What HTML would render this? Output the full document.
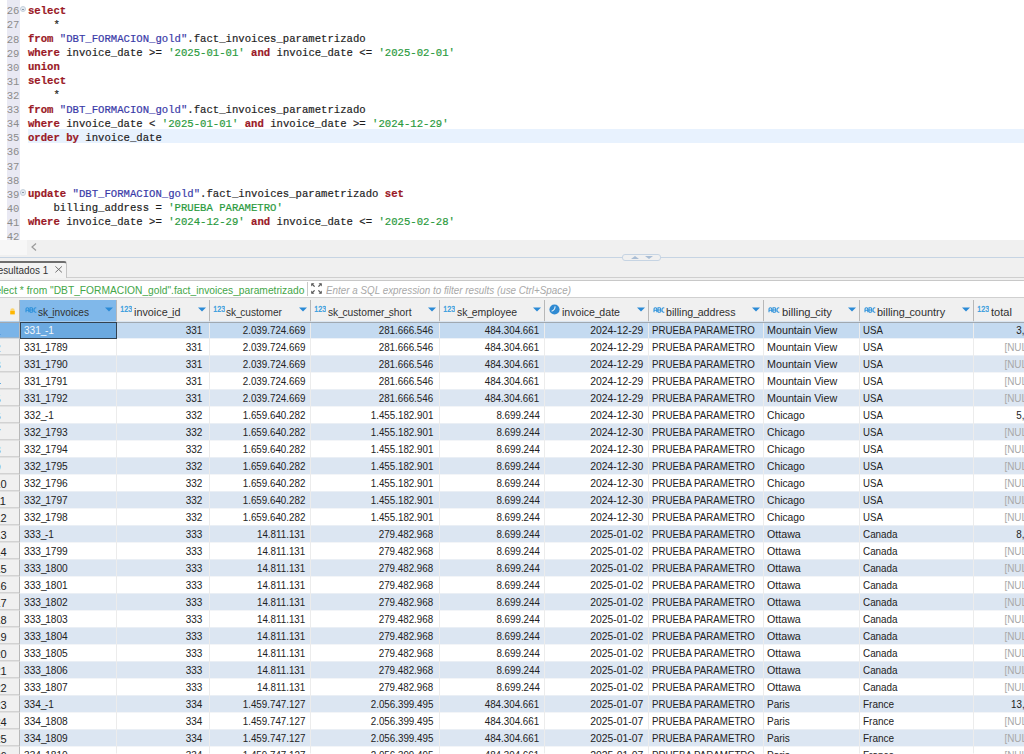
<!DOCTYPE html>
<html><head><meta charset="utf-8">
<style>
* { margin:0; padding:0; box-sizing:border-box; }
html, body { width:1024px; height:754px; overflow:hidden; background:#f0f0f0; position:relative; font-family:"Liberation Sans", sans-serif; }
#editor { position:absolute; left:0; top:0; width:1024px; height:240px; background:#fff; overflow:hidden; }
#gutter { position:absolute; left:7px; top:0; width:13px; height:240px; background:#e9e9f3; }
#curline { position:absolute; left:28px; top:129px; width:1000px; height:14.2px; background:#e8f2fe; }
.ln { position:absolute; left:0px; width:19.5px; text-align:right; font-family:"Liberation Mono", monospace; font-size:12px; line-height:14px; color:#8c8c8c; white-space:pre; transform-origin:right 11px; transform:scale(0.885,0.9); margin-top:0.5px; }
.cl { position:absolute; left:28px; font-family:"Liberation Mono", monospace; font-size:11.5px; line-height:14px; white-space:pre; transform-origin:left top; transform:scaleX(0.9232); -webkit-text-stroke:0.2px currentColor; }
.cl b { font-weight:bold; }
.fold { position:absolute; left:20px; width:6.3px; height:6.3px; border-radius:50%; background:#e4eaf0; border:1px solid #c5d0dc; }
.fold::after { content:""; position:absolute; left:0.9px; top:1.7px; width:2.5px; height:1px; background:#8a99aa; }
#hscroll { position:absolute; left:0; top:240px; width:1024px; height:15px; background:#f0f0f0; }
#hscroll .lft { position:absolute; left:0; top:0; width:27px; height:15px; background:#f7f7f7; }
#sash { position:absolute; left:0; top:257px; width:1024px; height:1px; background:#c6d4e3; }
#sashh { position:absolute; left:622px; top:254px; width:39px; height:7px; border:1px solid #c6d4e3; border-radius:3px; background:#f0f0f0; }
#tab { position:absolute; left:-10px; top:261px; width:77px; height:17px; background:#f3f3f3; border-top:2px solid #6e6e6e; border-right:1px solid #c4c4c4; border-top-right-radius:3px; }
#tabtxt { position:absolute; right:976px; top:263px; font-size:11px; line-height:14px; color:#333; white-space:pre; transform-origin:right center; transform:scaleX(0.898); }
#tabline { position:absolute; left:66px; top:277px; width:960px; height:1px; background:#cfcfcf; }
#filter { position:absolute; left:0; top:280px; width:1024px; height:18px; background:#fff; border-top:1px solid #c8c8c8; border-bottom:1px solid #c8c8c8; }
#ftxt { position:absolute; right:719.4px; top:283px; font-size:11px; line-height:14px; color:#44a648; white-space:pre; transform-origin:right center; transform:scaleX(0.931); }
#fsep { position:absolute; left:307px; top:282px; width:1px; height:14px; background:#c8c8c8; }
#fph { position:absolute; left:326px; top:283px; font-size:11px; line-height:14px; font-style:italic; color:#a8a8a8; white-space:pre; transform-origin:left center; transform:scaleX(0.894); }
#header { position:absolute; left:0; top:298px; width:1024px; height:24px; background:#f0f0f0; }
.hcell { position:absolute; top:300px; height:22px; background:#f0f0f0; }
.hhl { background:#80b8ea; }
.hsep { position:absolute; top:300px; width:1px; height:22px; background:#b8b8b8; }
.htxt { position:absolute; top:304.6px; font-size:11px; line-height:14px; color:#303030; white-space:pre; transform-origin:left center; }
.ic { position:absolute; }
.row { position:absolute; left:20px; width:1004px; height:17px; }
.sel { background:#c4daf0; }
.wht { background:#ffffff; }
.alt { background:#dce6f2; }
.rn { position:absolute; left:0; width:20px; height:17px; background:#f0f0f0; border-bottom:1px solid #b4b4b4; border-right:1px solid #b8b8b8; overflow:hidden; }
.rn span { position:absolute; left:-5.6px; top:2px; font-size:11px; line-height:14px; color:#222; }
.rnsel { background:#7ab4e8; }
.selcell { position:absolute; height:17px; background:#6ba9e0; border:1.5px solid #33414f; }
.cell { position:absolute; margin-top:0px; font-size:11px; line-height:17px; color:#222; white-space:pre; transform-origin:left center; }
.cell.r { transform-origin:right center; }
.cell.wt { color:#f4f8fc; }
.cell.nul { color:#a8a8a8; }
.u { letter-spacing:-1.6px; }
.vl { position:absolute; top:322px; width:1px; height:432px; background:#ececec; }
</style></head><body>
<div id="editor">
  <div id="gutter"></div>
  <div id="curline"></div>
  <div class="fold" style="top:5.9px"></div>
  <div class="fold" style="top:189.3px"></div>
<div class="ln" style="top:3.80px">26</div>
<div class="cl" style="top:3.80px"><b style="color:#9a1826">select</b></div>
<div class="ln" style="top:17.91px">27</div>
<div class="cl" style="top:17.91px"><span style="color:#1e1e1e">    *</span></div>
<div class="ln" style="top:32.02px">28</div>
<div class="cl" style="top:32.02px"><b style="color:#9a1826">from</b><span style="color:#1e1e1e"> </span><span style="color:#3a3aa8">"DBT_FORMACION_gold"</span><span style="color:#1e1e1e">.fact_invoices_parametrizado</span></div>
<div class="ln" style="top:46.13px">29</div>
<div class="cl" style="top:46.13px"><b style="color:#9a1826">where</b><span style="color:#1e1e1e"> invoice_date &gt;= </span><span style="color:#2a9a3c">'2025-01-01'</span><span style="color:#1e1e1e"> </span><b style="color:#9a1826">and</b><span style="color:#1e1e1e"> invoice_date &lt;= </span><span style="color:#2a9a3c">'2025-02-01'</span></div>
<div class="ln" style="top:60.24px">30</div>
<div class="cl" style="top:60.24px"><b style="color:#9a1826">union</b></div>
<div class="ln" style="top:74.35px">31</div>
<div class="cl" style="top:74.35px"><b style="color:#9a1826">select</b></div>
<div class="ln" style="top:88.46px">32</div>
<div class="cl" style="top:88.46px"><span style="color:#1e1e1e">    *</span></div>
<div class="ln" style="top:102.57px">33</div>
<div class="cl" style="top:102.57px"><b style="color:#9a1826">from</b><span style="color:#1e1e1e"> </span><span style="color:#3a3aa8">"DBT_FORMACION_gold"</span><span style="color:#1e1e1e">.fact_invoices_parametrizado</span></div>
<div class="ln" style="top:116.68px">34</div>
<div class="cl" style="top:116.68px"><b style="color:#9a1826">where</b><span style="color:#1e1e1e"> invoice_date &lt; </span><span style="color:#2a9a3c">'2025-01-01'</span><span style="color:#1e1e1e"> </span><b style="color:#9a1826">and</b><span style="color:#1e1e1e"> invoice_date &gt;= </span><span style="color:#2a9a3c">'2024-12-29'</span></div>
<div class="ln" style="top:130.79px">35</div>
<div class="cl" style="top:130.79px"><b style="color:#9a1826">order</b><span style="color:#1e1e1e"> </span><b style="color:#9a1826">by</b><span style="color:#1e1e1e"> invoice_date</span></div>
<div class="ln" style="top:144.90px">36</div>
<div class="ln" style="top:159.01px">37</div>
<div class="ln" style="top:173.12px">38</div>
<div class="ln" style="top:187.23px">39</div>
<div class="cl" style="top:187.23px"><b style="color:#9a1826">update</b><span style="color:#1e1e1e"> </span><span style="color:#3a3aa8">"DBT_FORMACION_gold"</span><span style="color:#1e1e1e">.fact_invoices_parametrizado </span><b style="color:#9a1826">set</b></div>
<div class="ln" style="top:201.34px">40</div>
<div class="cl" style="top:201.34px"><span style="color:#1e1e1e">    billing_address = </span><span style="color:#2a9a3c">'PRUEBA PARAMETRO'</span></div>
<div class="ln" style="top:215.45px">41</div>
<div class="cl" style="top:215.45px"><b style="color:#9a1826">where</b><span style="color:#1e1e1e"> invoice_date &gt;= </span><span style="color:#2a9a3c">'2024-12-29'</span><span style="color:#1e1e1e"> </span><b style="color:#9a1826">and</b><span style="color:#1e1e1e"> invoice_date &lt;= </span><span style="color:#2a9a3c">'2025-02-28'</span></div>
<div class="ln" style="top:229.56px">42</div>
</div>
<div id="hscroll"><div class="lft"></div>
<svg style="position:absolute;left:31px;top:3px" width="6" height="8" viewBox="0 0 6 8"><path d="M5 0.5 L1 4 L5 7.5" stroke="#9a9a9a" stroke-width="1.2" fill="none"/></svg></div>
<div id="sash"></div>
<div id="sashh"><svg style="position:absolute;left:4px;top:0px" width="30" height="5" viewBox="0 0 30 5"><path d="M4 4 L8 1 L12 4Z" fill="#a9bdd4"/><path d="M18 1 L22 4 L26 1Z" fill="#a9bdd4"/></svg></div>
<div id="tabline"></div>
<div id="tab"></div>
<div id="tabtxt">Resultados 1</div>
<svg style="position:absolute;left:54.7px;top:266.4px" width="7.3" height="6.8" viewBox="0 0 7.3 6.8"><path d="M0.4 0.4 L6.9 6.4 M6.9 0.4 L0.4 6.4" stroke="#6a6a6a" stroke-width="0.95"/></svg>
<div id="filter"></div>
<div id="ftxt">select * from "DBT_FORMACION_gold".fact_invoices_parametrizado</div>
<div id="fsep"></div>
<svg style="position:absolute;left:311px;top:282.8px" width="11" height="11" viewBox="0 0 11 11"><g fill="#5a5a5a"><path d="M0.2 0.2H3.4L0.2 3.4Z M10.8 0.2H7.6L10.8 3.4Z M0.2 10.8H3.4L0.2 7.6Z M10.8 10.8H7.6L10.8 7.6Z"/></g><path d="M1 1L3.6 3.6M10 1L7.4 3.6M1 10L3.6 7.4M10 10L7.4 7.4" stroke="#5a5a5a" stroke-width="1.3"/></svg>
<div id="fph">Enter a SQL expression to filter results (use Ctrl+Space)</div>
<div id="header"></div>
<div class="hcell hhl" style="left:20px;width:96px"></div>
<svg class="ic" style="left:24.8px;top:306.8px" width="12" height="6" viewBox="0 0 12 6"><path d="M1 5.3V2.3Q1 0.8 2.4 0.8Q3.8 0.8 3.8 2.3V5.3M1 3.2H3.8M5 5.3V0.8H6.7Q7.8 0.8 7.8 1.9Q7.8 2.9 6.7 2.9H5M6.7 2.9Q8 2.9 8 4.1Q8 5.3 6.7 5.3H5M11.3 1.1Q10.8 0.8 10.3 0.8Q9 0.8 9 3Q9 5.3 10.3 5.3Q10.8 5.3 11.3 5" stroke="#2a90da" stroke-width="1.05" fill="none"/></svg>
<div class="htxt" style="left:37.6px;transform:scaleX(0.922)">sk<span class="u">_</span>invoices</div>
<svg class="ic" style="left:105px;top:307px" width="8" height="5" viewBox="0 0 8 5"><path d="M0 0.5H8L4 4.5Z" fill="#2a8ad6"/></svg>
<div class="hcell" style="left:116px;width:93px"></div>
<div class="hsep" style="left:116px"></div>
<svg class="ic" style="left:120px;top:305px" width="12" height="7" viewBox="0 0 12 7"><text x="0.3" y="6.5" font-family="Liberation Sans" font-size="8.5" fill="#3a9ede" stroke="#3a9ede" stroke-width="0.35" textLength="11.8" lengthAdjust="spacingAndGlyphs">123</text></svg>
<div class="htxt" style="left:133.9px;transform:scaleX(0.983)">invoice<span class="u">_</span>id</div>
<svg class="ic" style="left:198px;top:307px" width="8" height="5" viewBox="0 0 8 5"><path d="M0 0.5H8L4 4.5Z" fill="#2a8ad6"/></svg>
<div class="hcell" style="left:209px;width:101px"></div>
<div class="hsep" style="left:209px"></div>
<svg class="ic" style="left:213px;top:305px" width="12" height="7" viewBox="0 0 12 7"><text x="0.3" y="6.5" font-family="Liberation Sans" font-size="8.5" fill="#3a9ede" stroke="#3a9ede" stroke-width="0.35" textLength="11.8" lengthAdjust="spacingAndGlyphs">123</text></svg>
<div class="htxt" style="left:225.6px;transform:scaleX(0.92)">sk<span class="u">_</span>customer</div>
<svg class="ic" style="left:299px;top:307px" width="8" height="5" viewBox="0 0 8 5"><path d="M0 0.5H8L4 4.5Z" fill="#2a8ad6"/></svg>
<div class="hcell" style="left:310px;width:129px"></div>
<div class="hsep" style="left:310px"></div>
<svg class="ic" style="left:314px;top:305px" width="12" height="7" viewBox="0 0 12 7"><text x="0.3" y="6.5" font-family="Liberation Sans" font-size="8.5" fill="#3a9ede" stroke="#3a9ede" stroke-width="0.35" textLength="11.8" lengthAdjust="spacingAndGlyphs">123</text></svg>
<div class="htxt" style="left:327.5px;transform:scaleX(0.93)">sk<span class="u">_</span>customer<span class="u">_</span>short</div>
<svg class="ic" style="left:428px;top:307px" width="8" height="5" viewBox="0 0 8 5"><path d="M0 0.5H8L4 4.5Z" fill="#2a8ad6"/></svg>
<div class="hcell" style="left:439px;width:105px"></div>
<div class="hsep" style="left:439px"></div>
<svg class="ic" style="left:443px;top:305px" width="12" height="7" viewBox="0 0 12 7"><text x="0.3" y="6.5" font-family="Liberation Sans" font-size="8.5" fill="#3a9ede" stroke="#3a9ede" stroke-width="0.35" textLength="11.8" lengthAdjust="spacingAndGlyphs">123</text></svg>
<div class="htxt" style="left:456.8px;transform:scaleX(0.951)">sk<span class="u">_</span>employee</div>
<svg class="ic" style="left:533px;top:307px" width="8" height="5" viewBox="0 0 8 5"><path d="M0 0.5H8L4 4.5Z" fill="#2a8ad6"/></svg>
<div class="hcell" style="left:544px;width:104px"></div>
<div class="hsep" style="left:544px"></div>
<svg class="ic" style="left:549.4px;top:304.3px" width="11" height="11" viewBox="0 0 11 11"><circle cx="5.5" cy="5.5" r="5.1" fill="#2f8ad2"/><path d="M6 2.4Q6.3 5.9 2.6 7.2" stroke="#e8f2fa" stroke-width="1.1" fill="none"/></svg>
<div class="htxt" style="left:562.4px;transform:scaleX(0.963)">invoice<span class="u">_</span>date</div>
<svg class="ic" style="left:637px;top:307px" width="8" height="5" viewBox="0 0 8 5"><path d="M0 0.5H8L4 4.5Z" fill="#2a8ad6"/></svg>
<div class="hcell" style="left:648px;width:115px"></div>
<div class="hsep" style="left:648px"></div>
<svg class="ic" style="left:652.8px;top:306.8px" width="12" height="6" viewBox="0 0 12 6"><path d="M1 5.3V2.3Q1 0.8 2.4 0.8Q3.8 0.8 3.8 2.3V5.3M1 3.2H3.8M5 5.3V0.8H6.7Q7.8 0.8 7.8 1.9Q7.8 2.9 6.7 2.9H5M6.7 2.9Q8 2.9 8 4.1Q8 5.3 6.7 5.3H5M11.3 1.1Q10.8 0.8 10.3 0.8Q9 0.8 9 3Q9 5.3 10.3 5.3Q10.8 5.3 11.3 5" stroke="#2a90da" stroke-width="1.05" fill="none"/></svg>
<div class="htxt" style="left:666.3px;transform:scaleX(0.968)">billing<span class="u">_</span>address</div>
<svg class="ic" style="left:752px;top:307px" width="8" height="5" viewBox="0 0 8 5"><path d="M0 0.5H8L4 4.5Z" fill="#2a8ad6"/></svg>
<div class="hcell" style="left:763px;width:96px"></div>
<div class="hsep" style="left:763px"></div>
<svg class="ic" style="left:767.8px;top:306.8px" width="12" height="6" viewBox="0 0 12 6"><path d="M1 5.3V2.3Q1 0.8 2.4 0.8Q3.8 0.8 3.8 2.3V5.3M1 3.2H3.8M5 5.3V0.8H6.7Q7.8 0.8 7.8 1.9Q7.8 2.9 6.7 2.9H5M6.7 2.9Q8 2.9 8 4.1Q8 5.3 6.7 5.3H5M11.3 1.1Q10.8 0.8 10.3 0.8Q9 0.8 9 3Q9 5.3 10.3 5.3Q10.8 5.3 11.3 5" stroke="#2a90da" stroke-width="1.05" fill="none"/></svg>
<div class="htxt" style="left:781.5px;transform:scaleX(1.016)">billing<span class="u">_</span>city</div>
<svg class="ic" style="left:848px;top:307px" width="8" height="5" viewBox="0 0 8 5"><path d="M0 0.5H8L4 4.5Z" fill="#2a8ad6"/></svg>
<div class="hcell" style="left:859px;width:114px"></div>
<div class="hsep" style="left:859px"></div>
<svg class="ic" style="left:863.8px;top:306.8px" width="12" height="6" viewBox="0 0 12 6"><path d="M1 5.3V2.3Q1 0.8 2.4 0.8Q3.8 0.8 3.8 2.3V5.3M1 3.2H3.8M5 5.3V0.8H6.7Q7.8 0.8 7.8 1.9Q7.8 2.9 6.7 2.9H5M6.7 2.9Q8 2.9 8 4.1Q8 5.3 6.7 5.3H5M11.3 1.1Q10.8 0.8 10.3 0.8Q9 0.8 9 3Q9 5.3 10.3 5.3Q10.8 5.3 11.3 5" stroke="#2a90da" stroke-width="1.05" fill="none"/></svg>
<div class="htxt" style="left:876.8px;transform:scaleX(0.991)">billing<span class="u">_</span>country</div>
<svg class="ic" style="left:962px;top:307px" width="8" height="5" viewBox="0 0 8 5"><path d="M0 0.5H8L4 4.5Z" fill="#2a8ad6"/></svg>
<div class="hcell" style="left:973px;width:68px"></div>
<div class="hsep" style="left:973px"></div>
<svg class="ic" style="left:977px;top:305px" width="12" height="7" viewBox="0 0 12 7"><text x="0.3" y="6.5" font-family="Liberation Sans" font-size="8.5" fill="#3a9ede" stroke="#3a9ede" stroke-width="0.35" textLength="11.8" lengthAdjust="spacingAndGlyphs">123</text></svg>
<div class="htxt" style="left:990.8px;transform:scaleX(1.005)">total</div>
<div style="position:absolute;left:0;top:297px;width:1024px;height:1px;background:#d0d0d0"></div>
<svg style="position:absolute;left:10.1px;top:307.7px" width="5" height="7" viewBox="0 0 5 7"><path d="M0.3 3.2V2.4Q0.3 0.2 2.5 0.2Q4.7 0.2 4.7 2.4V3.2Z" fill="#fcd46a"/><rect x="0.2" y="3" width="4.6" height="3.4" fill="#ffb600"/></svg>
<div style="position:absolute;left:19px;top:300px;width:1px;height:22px;background:#b8b8b8"></div>
<div id="gridwrap" style="position:absolute;left:0;top:0;width:1024px;height:754px;transform:translateY(-0.5px)">
<div class="row sel" style="top:322px"></div>
<div class="row wht" style="top:339px"></div>
<div class="row alt" style="top:356px"></div>
<div class="row wht" style="top:373px"></div>
<div class="row alt" style="top:390px"></div>
<div class="row wht" style="top:407px"></div>
<div class="row alt" style="top:424px"></div>
<div class="row wht" style="top:441px"></div>
<div class="row alt" style="top:458px"></div>
<div class="row wht" style="top:475px"></div>
<div class="row alt" style="top:492px"></div>
<div class="row wht" style="top:509px"></div>
<div class="row alt" style="top:526px"></div>
<div class="row wht" style="top:543px"></div>
<div class="row alt" style="top:560px"></div>
<div class="row wht" style="top:577px"></div>
<div class="row alt" style="top:594px"></div>
<div class="row wht" style="top:611px"></div>
<div class="row alt" style="top:628px"></div>
<div class="row wht" style="top:645px"></div>
<div class="row alt" style="top:662px"></div>
<div class="row wht" style="top:679px"></div>
<div class="row alt" style="top:696px"></div>
<div class="row wht" style="top:713px"></div>
<div class="row alt" style="top:730px"></div>
<div class="row wht" style="top:747px"></div>
<div class="vl" style="left:116px"></div>
<div class="vl" style="left:209px"></div>
<div class="vl" style="left:310px"></div>
<div class="vl" style="left:439px"></div>
<div class="vl" style="left:544px"></div>
<div class="vl" style="left:648px"></div>
<div class="vl" style="left:763px"></div>
<div class="vl" style="left:859px"></div>
<div class="vl" style="left:973px"></div>
<div class="vl" style="left:1041px"></div>
<div class="rn rnsel" style="top:322px"><span>1</span></div>
<div class="cell wt" style="top:322px;left:24px;transform:scaleX(0.916)">331<span class="u">_</span>-1</div>
<div class="cell r" style="top:322px;right:821.3px;transform:scaleX(0.906)">331</div>
<div class="cell r" style="top:322px;right:719.1px;transform:scaleX(0.89)">2.039.724.669</div>
<div class="cell r" style="top:322px;right:590.5px;transform:scaleX(0.89)">281.666.546</div>
<div class="cell r" style="top:322px;right:484.5px;transform:scaleX(0.89)">484.304.661</div>
<div class="cell r" style="top:322px;right:381.0px;transform:scaleX(0.943)">2024-12-29</div>
<div class="cell" style="top:322px;left:652px;transform:scaleX(0.883)">PRUEBA PARAMETRO</div>
<div class="cell" style="top:322px;left:767px;transform:scaleX(0.976)">Mountain View</div>
<div class="cell" style="top:322px;left:863px;transform:scaleX(0.877)">USA</div>
<div class="cell r" style="top:322px;right:-11.5px;transform:scaleX(0.89)">3,96</div>
<div class="rn" style="top:339px"><span>2</span></div>
<div class="cell" style="top:339px;left:24px;transform:scaleX(0.923)">331<span class="u">_</span>1789</div>
<div class="cell r" style="top:339px;right:821.3px;transform:scaleX(0.906)">331</div>
<div class="cell r" style="top:339px;right:719.1px;transform:scaleX(0.89)">2.039.724.669</div>
<div class="cell r" style="top:339px;right:590.5px;transform:scaleX(0.89)">281.666.546</div>
<div class="cell r" style="top:339px;right:484.5px;transform:scaleX(0.89)">484.304.661</div>
<div class="cell r" style="top:339px;right:381.0px;transform:scaleX(0.943)">2024-12-29</div>
<div class="cell" style="top:339px;left:652px;transform:scaleX(0.883)">PRUEBA PARAMETRO</div>
<div class="cell" style="top:339px;left:767px;transform:scaleX(0.976)">Mountain View</div>
<div class="cell" style="top:339px;left:863px;transform:scaleX(0.877)">USA</div>
<div class="cell r nul" style="top:339px;right:-11.5px;transform:scaleX(0.9)">[NULL]</div>
<div class="rn" style="top:356px"><span>3</span></div>
<div class="cell" style="top:356px;left:24px;transform:scaleX(0.923)">331<span class="u">_</span>1790</div>
<div class="cell r" style="top:356px;right:821.3px;transform:scaleX(0.906)">331</div>
<div class="cell r" style="top:356px;right:719.1px;transform:scaleX(0.89)">2.039.724.669</div>
<div class="cell r" style="top:356px;right:590.5px;transform:scaleX(0.89)">281.666.546</div>
<div class="cell r" style="top:356px;right:484.5px;transform:scaleX(0.89)">484.304.661</div>
<div class="cell r" style="top:356px;right:381.0px;transform:scaleX(0.943)">2024-12-29</div>
<div class="cell" style="top:356px;left:652px;transform:scaleX(0.883)">PRUEBA PARAMETRO</div>
<div class="cell" style="top:356px;left:767px;transform:scaleX(0.976)">Mountain View</div>
<div class="cell" style="top:356px;left:863px;transform:scaleX(0.877)">USA</div>
<div class="cell r nul" style="top:356px;right:-11.5px;transform:scaleX(0.9)">[NULL]</div>
<div class="rn" style="top:373px"><span>4</span></div>
<div class="cell" style="top:373px;left:24px;transform:scaleX(0.923)">331<span class="u">_</span>1791</div>
<div class="cell r" style="top:373px;right:821.3px;transform:scaleX(0.906)">331</div>
<div class="cell r" style="top:373px;right:719.1px;transform:scaleX(0.89)">2.039.724.669</div>
<div class="cell r" style="top:373px;right:590.5px;transform:scaleX(0.89)">281.666.546</div>
<div class="cell r" style="top:373px;right:484.5px;transform:scaleX(0.89)">484.304.661</div>
<div class="cell r" style="top:373px;right:381.0px;transform:scaleX(0.943)">2024-12-29</div>
<div class="cell" style="top:373px;left:652px;transform:scaleX(0.883)">PRUEBA PARAMETRO</div>
<div class="cell" style="top:373px;left:767px;transform:scaleX(0.976)">Mountain View</div>
<div class="cell" style="top:373px;left:863px;transform:scaleX(0.877)">USA</div>
<div class="cell r nul" style="top:373px;right:-11.5px;transform:scaleX(0.9)">[NULL]</div>
<div class="rn" style="top:390px"><span>5</span></div>
<div class="cell" style="top:390px;left:24px;transform:scaleX(0.923)">331<span class="u">_</span>1792</div>
<div class="cell r" style="top:390px;right:821.3px;transform:scaleX(0.906)">331</div>
<div class="cell r" style="top:390px;right:719.1px;transform:scaleX(0.89)">2.039.724.669</div>
<div class="cell r" style="top:390px;right:590.5px;transform:scaleX(0.89)">281.666.546</div>
<div class="cell r" style="top:390px;right:484.5px;transform:scaleX(0.89)">484.304.661</div>
<div class="cell r" style="top:390px;right:381.0px;transform:scaleX(0.943)">2024-12-29</div>
<div class="cell" style="top:390px;left:652px;transform:scaleX(0.883)">PRUEBA PARAMETRO</div>
<div class="cell" style="top:390px;left:767px;transform:scaleX(0.976)">Mountain View</div>
<div class="cell" style="top:390px;left:863px;transform:scaleX(0.877)">USA</div>
<div class="cell r nul" style="top:390px;right:-11.5px;transform:scaleX(0.9)">[NULL]</div>
<div class="rn" style="top:407px"><span>6</span></div>
<div class="cell" style="top:407px;left:24px;transform:scaleX(0.916)">332<span class="u">_</span>-1</div>
<div class="cell r" style="top:407px;right:821.3px;transform:scaleX(0.906)">332</div>
<div class="cell r" style="top:407px;right:719.1px;transform:scaleX(0.89)">1.659.640.282</div>
<div class="cell r" style="top:407px;right:590.5px;transform:scaleX(0.89)">1.455.182.901</div>
<div class="cell r" style="top:407px;right:484.5px;transform:scaleX(0.89)">8.699.244</div>
<div class="cell r" style="top:407px;right:381.0px;transform:scaleX(0.943)">2024-12-30</div>
<div class="cell" style="top:407px;left:652px;transform:scaleX(0.883)">PRUEBA PARAMETRO</div>
<div class="cell" style="top:407px;left:767px;transform:scaleX(0.935)">Chicago</div>
<div class="cell" style="top:407px;left:863px;transform:scaleX(0.877)">USA</div>
<div class="cell r" style="top:407px;right:-11.5px;transform:scaleX(0.89)">5,94</div>
<div class="rn" style="top:424px"><span>7</span></div>
<div class="cell" style="top:424px;left:24px;transform:scaleX(0.923)">332<span class="u">_</span>1793</div>
<div class="cell r" style="top:424px;right:821.3px;transform:scaleX(0.906)">332</div>
<div class="cell r" style="top:424px;right:719.1px;transform:scaleX(0.89)">1.659.640.282</div>
<div class="cell r" style="top:424px;right:590.5px;transform:scaleX(0.89)">1.455.182.901</div>
<div class="cell r" style="top:424px;right:484.5px;transform:scaleX(0.89)">8.699.244</div>
<div class="cell r" style="top:424px;right:381.0px;transform:scaleX(0.943)">2024-12-30</div>
<div class="cell" style="top:424px;left:652px;transform:scaleX(0.883)">PRUEBA PARAMETRO</div>
<div class="cell" style="top:424px;left:767px;transform:scaleX(0.935)">Chicago</div>
<div class="cell" style="top:424px;left:863px;transform:scaleX(0.877)">USA</div>
<div class="cell r nul" style="top:424px;right:-11.5px;transform:scaleX(0.9)">[NULL]</div>
<div class="rn" style="top:441px"><span>8</span></div>
<div class="cell" style="top:441px;left:24px;transform:scaleX(0.923)">332<span class="u">_</span>1794</div>
<div class="cell r" style="top:441px;right:821.3px;transform:scaleX(0.906)">332</div>
<div class="cell r" style="top:441px;right:719.1px;transform:scaleX(0.89)">1.659.640.282</div>
<div class="cell r" style="top:441px;right:590.5px;transform:scaleX(0.89)">1.455.182.901</div>
<div class="cell r" style="top:441px;right:484.5px;transform:scaleX(0.89)">8.699.244</div>
<div class="cell r" style="top:441px;right:381.0px;transform:scaleX(0.943)">2024-12-30</div>
<div class="cell" style="top:441px;left:652px;transform:scaleX(0.883)">PRUEBA PARAMETRO</div>
<div class="cell" style="top:441px;left:767px;transform:scaleX(0.935)">Chicago</div>
<div class="cell" style="top:441px;left:863px;transform:scaleX(0.877)">USA</div>
<div class="cell r nul" style="top:441px;right:-11.5px;transform:scaleX(0.9)">[NULL]</div>
<div class="rn" style="top:458px"><span>9</span></div>
<div class="cell" style="top:458px;left:24px;transform:scaleX(0.923)">332<span class="u">_</span>1795</div>
<div class="cell r" style="top:458px;right:821.3px;transform:scaleX(0.906)">332</div>
<div class="cell r" style="top:458px;right:719.1px;transform:scaleX(0.89)">1.659.640.282</div>
<div class="cell r" style="top:458px;right:590.5px;transform:scaleX(0.89)">1.455.182.901</div>
<div class="cell r" style="top:458px;right:484.5px;transform:scaleX(0.89)">8.699.244</div>
<div class="cell r" style="top:458px;right:381.0px;transform:scaleX(0.943)">2024-12-30</div>
<div class="cell" style="top:458px;left:652px;transform:scaleX(0.883)">PRUEBA PARAMETRO</div>
<div class="cell" style="top:458px;left:767px;transform:scaleX(0.935)">Chicago</div>
<div class="cell" style="top:458px;left:863px;transform:scaleX(0.877)">USA</div>
<div class="cell r nul" style="top:458px;right:-11.5px;transform:scaleX(0.9)">[NULL]</div>
<div class="rn" style="top:475px"><span>10</span></div>
<div class="cell" style="top:475px;left:24px;transform:scaleX(0.923)">332<span class="u">_</span>1796</div>
<div class="cell r" style="top:475px;right:821.3px;transform:scaleX(0.906)">332</div>
<div class="cell r" style="top:475px;right:719.1px;transform:scaleX(0.89)">1.659.640.282</div>
<div class="cell r" style="top:475px;right:590.5px;transform:scaleX(0.89)">1.455.182.901</div>
<div class="cell r" style="top:475px;right:484.5px;transform:scaleX(0.89)">8.699.244</div>
<div class="cell r" style="top:475px;right:381.0px;transform:scaleX(0.943)">2024-12-30</div>
<div class="cell" style="top:475px;left:652px;transform:scaleX(0.883)">PRUEBA PARAMETRO</div>
<div class="cell" style="top:475px;left:767px;transform:scaleX(0.935)">Chicago</div>
<div class="cell" style="top:475px;left:863px;transform:scaleX(0.877)">USA</div>
<div class="cell r nul" style="top:475px;right:-11.5px;transform:scaleX(0.9)">[NULL]</div>
<div class="rn" style="top:492px"><span>11</span></div>
<div class="cell" style="top:492px;left:24px;transform:scaleX(0.923)">332<span class="u">_</span>1797</div>
<div class="cell r" style="top:492px;right:821.3px;transform:scaleX(0.906)">332</div>
<div class="cell r" style="top:492px;right:719.1px;transform:scaleX(0.89)">1.659.640.282</div>
<div class="cell r" style="top:492px;right:590.5px;transform:scaleX(0.89)">1.455.182.901</div>
<div class="cell r" style="top:492px;right:484.5px;transform:scaleX(0.89)">8.699.244</div>
<div class="cell r" style="top:492px;right:381.0px;transform:scaleX(0.943)">2024-12-30</div>
<div class="cell" style="top:492px;left:652px;transform:scaleX(0.883)">PRUEBA PARAMETRO</div>
<div class="cell" style="top:492px;left:767px;transform:scaleX(0.935)">Chicago</div>
<div class="cell" style="top:492px;left:863px;transform:scaleX(0.877)">USA</div>
<div class="cell r nul" style="top:492px;right:-11.5px;transform:scaleX(0.9)">[NULL]</div>
<div class="rn" style="top:509px"><span>12</span></div>
<div class="cell" style="top:509px;left:24px;transform:scaleX(0.923)">332<span class="u">_</span>1798</div>
<div class="cell r" style="top:509px;right:821.3px;transform:scaleX(0.906)">332</div>
<div class="cell r" style="top:509px;right:719.1px;transform:scaleX(0.89)">1.659.640.282</div>
<div class="cell r" style="top:509px;right:590.5px;transform:scaleX(0.89)">1.455.182.901</div>
<div class="cell r" style="top:509px;right:484.5px;transform:scaleX(0.89)">8.699.244</div>
<div class="cell r" style="top:509px;right:381.0px;transform:scaleX(0.943)">2024-12-30</div>
<div class="cell" style="top:509px;left:652px;transform:scaleX(0.883)">PRUEBA PARAMETRO</div>
<div class="cell" style="top:509px;left:767px;transform:scaleX(0.935)">Chicago</div>
<div class="cell" style="top:509px;left:863px;transform:scaleX(0.877)">USA</div>
<div class="cell r nul" style="top:509px;right:-11.5px;transform:scaleX(0.9)">[NULL]</div>
<div class="rn" style="top:526px"><span>13</span></div>
<div class="cell" style="top:526px;left:24px;transform:scaleX(0.916)">333<span class="u">_</span>-1</div>
<div class="cell r" style="top:526px;right:821.3px;transform:scaleX(0.906)">333</div>
<div class="cell r" style="top:526px;right:719.1px;transform:scaleX(0.89)">14.811.131</div>
<div class="cell r" style="top:526px;right:590.5px;transform:scaleX(0.89)">279.482.968</div>
<div class="cell r" style="top:526px;right:484.5px;transform:scaleX(0.89)">8.699.244</div>
<div class="cell r" style="top:526px;right:381.0px;transform:scaleX(0.943)">2025-01-02</div>
<div class="cell" style="top:526px;left:652px;transform:scaleX(0.883)">PRUEBA PARAMETRO</div>
<div class="cell" style="top:526px;left:767px;transform:scaleX(0.969)">Ottawa</div>
<div class="cell" style="top:526px;left:863px;transform:scaleX(0.897)">Canada</div>
<div class="cell r" style="top:526px;right:-11.5px;transform:scaleX(0.89)">8,91</div>
<div class="rn" style="top:543px"><span>14</span></div>
<div class="cell" style="top:543px;left:24px;transform:scaleX(0.923)">333<span class="u">_</span>1799</div>
<div class="cell r" style="top:543px;right:821.3px;transform:scaleX(0.906)">333</div>
<div class="cell r" style="top:543px;right:719.1px;transform:scaleX(0.89)">14.811.131</div>
<div class="cell r" style="top:543px;right:590.5px;transform:scaleX(0.89)">279.482.968</div>
<div class="cell r" style="top:543px;right:484.5px;transform:scaleX(0.89)">8.699.244</div>
<div class="cell r" style="top:543px;right:381.0px;transform:scaleX(0.943)">2025-01-02</div>
<div class="cell" style="top:543px;left:652px;transform:scaleX(0.883)">PRUEBA PARAMETRO</div>
<div class="cell" style="top:543px;left:767px;transform:scaleX(0.969)">Ottawa</div>
<div class="cell" style="top:543px;left:863px;transform:scaleX(0.897)">Canada</div>
<div class="cell r nul" style="top:543px;right:-11.5px;transform:scaleX(0.9)">[NULL]</div>
<div class="rn" style="top:560px"><span>15</span></div>
<div class="cell" style="top:560px;left:24px;transform:scaleX(0.923)">333<span class="u">_</span>1800</div>
<div class="cell r" style="top:560px;right:821.3px;transform:scaleX(0.906)">333</div>
<div class="cell r" style="top:560px;right:719.1px;transform:scaleX(0.89)">14.811.131</div>
<div class="cell r" style="top:560px;right:590.5px;transform:scaleX(0.89)">279.482.968</div>
<div class="cell r" style="top:560px;right:484.5px;transform:scaleX(0.89)">8.699.244</div>
<div class="cell r" style="top:560px;right:381.0px;transform:scaleX(0.943)">2025-01-02</div>
<div class="cell" style="top:560px;left:652px;transform:scaleX(0.883)">PRUEBA PARAMETRO</div>
<div class="cell" style="top:560px;left:767px;transform:scaleX(0.969)">Ottawa</div>
<div class="cell" style="top:560px;left:863px;transform:scaleX(0.897)">Canada</div>
<div class="cell r nul" style="top:560px;right:-11.5px;transform:scaleX(0.9)">[NULL]</div>
<div class="rn" style="top:577px"><span>16</span></div>
<div class="cell" style="top:577px;left:24px;transform:scaleX(0.923)">333<span class="u">_</span>1801</div>
<div class="cell r" style="top:577px;right:821.3px;transform:scaleX(0.906)">333</div>
<div class="cell r" style="top:577px;right:719.1px;transform:scaleX(0.89)">14.811.131</div>
<div class="cell r" style="top:577px;right:590.5px;transform:scaleX(0.89)">279.482.968</div>
<div class="cell r" style="top:577px;right:484.5px;transform:scaleX(0.89)">8.699.244</div>
<div class="cell r" style="top:577px;right:381.0px;transform:scaleX(0.943)">2025-01-02</div>
<div class="cell" style="top:577px;left:652px;transform:scaleX(0.883)">PRUEBA PARAMETRO</div>
<div class="cell" style="top:577px;left:767px;transform:scaleX(0.969)">Ottawa</div>
<div class="cell" style="top:577px;left:863px;transform:scaleX(0.897)">Canada</div>
<div class="cell r nul" style="top:577px;right:-11.5px;transform:scaleX(0.9)">[NULL]</div>
<div class="rn" style="top:594px"><span>17</span></div>
<div class="cell" style="top:594px;left:24px;transform:scaleX(0.923)">333<span class="u">_</span>1802</div>
<div class="cell r" style="top:594px;right:821.3px;transform:scaleX(0.906)">333</div>
<div class="cell r" style="top:594px;right:719.1px;transform:scaleX(0.89)">14.811.131</div>
<div class="cell r" style="top:594px;right:590.5px;transform:scaleX(0.89)">279.482.968</div>
<div class="cell r" style="top:594px;right:484.5px;transform:scaleX(0.89)">8.699.244</div>
<div class="cell r" style="top:594px;right:381.0px;transform:scaleX(0.943)">2025-01-02</div>
<div class="cell" style="top:594px;left:652px;transform:scaleX(0.883)">PRUEBA PARAMETRO</div>
<div class="cell" style="top:594px;left:767px;transform:scaleX(0.969)">Ottawa</div>
<div class="cell" style="top:594px;left:863px;transform:scaleX(0.897)">Canada</div>
<div class="cell r nul" style="top:594px;right:-11.5px;transform:scaleX(0.9)">[NULL]</div>
<div class="rn" style="top:611px"><span>18</span></div>
<div class="cell" style="top:611px;left:24px;transform:scaleX(0.923)">333<span class="u">_</span>1803</div>
<div class="cell r" style="top:611px;right:821.3px;transform:scaleX(0.906)">333</div>
<div class="cell r" style="top:611px;right:719.1px;transform:scaleX(0.89)">14.811.131</div>
<div class="cell r" style="top:611px;right:590.5px;transform:scaleX(0.89)">279.482.968</div>
<div class="cell r" style="top:611px;right:484.5px;transform:scaleX(0.89)">8.699.244</div>
<div class="cell r" style="top:611px;right:381.0px;transform:scaleX(0.943)">2025-01-02</div>
<div class="cell" style="top:611px;left:652px;transform:scaleX(0.883)">PRUEBA PARAMETRO</div>
<div class="cell" style="top:611px;left:767px;transform:scaleX(0.969)">Ottawa</div>
<div class="cell" style="top:611px;left:863px;transform:scaleX(0.897)">Canada</div>
<div class="cell r nul" style="top:611px;right:-11.5px;transform:scaleX(0.9)">[NULL]</div>
<div class="rn" style="top:628px"><span>19</span></div>
<div class="cell" style="top:628px;left:24px;transform:scaleX(0.923)">333<span class="u">_</span>1804</div>
<div class="cell r" style="top:628px;right:821.3px;transform:scaleX(0.906)">333</div>
<div class="cell r" style="top:628px;right:719.1px;transform:scaleX(0.89)">14.811.131</div>
<div class="cell r" style="top:628px;right:590.5px;transform:scaleX(0.89)">279.482.968</div>
<div class="cell r" style="top:628px;right:484.5px;transform:scaleX(0.89)">8.699.244</div>
<div class="cell r" style="top:628px;right:381.0px;transform:scaleX(0.943)">2025-01-02</div>
<div class="cell" style="top:628px;left:652px;transform:scaleX(0.883)">PRUEBA PARAMETRO</div>
<div class="cell" style="top:628px;left:767px;transform:scaleX(0.969)">Ottawa</div>
<div class="cell" style="top:628px;left:863px;transform:scaleX(0.897)">Canada</div>
<div class="cell r nul" style="top:628px;right:-11.5px;transform:scaleX(0.9)">[NULL]</div>
<div class="rn" style="top:645px"><span>20</span></div>
<div class="cell" style="top:645px;left:24px;transform:scaleX(0.923)">333<span class="u">_</span>1805</div>
<div class="cell r" style="top:645px;right:821.3px;transform:scaleX(0.906)">333</div>
<div class="cell r" style="top:645px;right:719.1px;transform:scaleX(0.89)">14.811.131</div>
<div class="cell r" style="top:645px;right:590.5px;transform:scaleX(0.89)">279.482.968</div>
<div class="cell r" style="top:645px;right:484.5px;transform:scaleX(0.89)">8.699.244</div>
<div class="cell r" style="top:645px;right:381.0px;transform:scaleX(0.943)">2025-01-02</div>
<div class="cell" style="top:645px;left:652px;transform:scaleX(0.883)">PRUEBA PARAMETRO</div>
<div class="cell" style="top:645px;left:767px;transform:scaleX(0.969)">Ottawa</div>
<div class="cell" style="top:645px;left:863px;transform:scaleX(0.897)">Canada</div>
<div class="cell r nul" style="top:645px;right:-11.5px;transform:scaleX(0.9)">[NULL]</div>
<div class="rn" style="top:662px"><span>21</span></div>
<div class="cell" style="top:662px;left:24px;transform:scaleX(0.923)">333<span class="u">_</span>1806</div>
<div class="cell r" style="top:662px;right:821.3px;transform:scaleX(0.906)">333</div>
<div class="cell r" style="top:662px;right:719.1px;transform:scaleX(0.89)">14.811.131</div>
<div class="cell r" style="top:662px;right:590.5px;transform:scaleX(0.89)">279.482.968</div>
<div class="cell r" style="top:662px;right:484.5px;transform:scaleX(0.89)">8.699.244</div>
<div class="cell r" style="top:662px;right:381.0px;transform:scaleX(0.943)">2025-01-02</div>
<div class="cell" style="top:662px;left:652px;transform:scaleX(0.883)">PRUEBA PARAMETRO</div>
<div class="cell" style="top:662px;left:767px;transform:scaleX(0.969)">Ottawa</div>
<div class="cell" style="top:662px;left:863px;transform:scaleX(0.897)">Canada</div>
<div class="cell r nul" style="top:662px;right:-11.5px;transform:scaleX(0.9)">[NULL]</div>
<div class="rn" style="top:679px"><span>22</span></div>
<div class="cell" style="top:679px;left:24px;transform:scaleX(0.923)">333<span class="u">_</span>1807</div>
<div class="cell r" style="top:679px;right:821.3px;transform:scaleX(0.906)">333</div>
<div class="cell r" style="top:679px;right:719.1px;transform:scaleX(0.89)">14.811.131</div>
<div class="cell r" style="top:679px;right:590.5px;transform:scaleX(0.89)">279.482.968</div>
<div class="cell r" style="top:679px;right:484.5px;transform:scaleX(0.89)">8.699.244</div>
<div class="cell r" style="top:679px;right:381.0px;transform:scaleX(0.943)">2025-01-02</div>
<div class="cell" style="top:679px;left:652px;transform:scaleX(0.883)">PRUEBA PARAMETRO</div>
<div class="cell" style="top:679px;left:767px;transform:scaleX(0.969)">Ottawa</div>
<div class="cell" style="top:679px;left:863px;transform:scaleX(0.897)">Canada</div>
<div class="cell r nul" style="top:679px;right:-11.5px;transform:scaleX(0.9)">[NULL]</div>
<div class="rn" style="top:696px"><span>23</span></div>
<div class="cell" style="top:696px;left:24px;transform:scaleX(0.916)">334<span class="u">_</span>-1</div>
<div class="cell r" style="top:696px;right:821.3px;transform:scaleX(0.906)">334</div>
<div class="cell r" style="top:696px;right:719.1px;transform:scaleX(0.89)">1.459.747.127</div>
<div class="cell r" style="top:696px;right:590.5px;transform:scaleX(0.89)">2.056.399.495</div>
<div class="cell r" style="top:696px;right:484.5px;transform:scaleX(0.89)">484.304.661</div>
<div class="cell r" style="top:696px;right:381.0px;transform:scaleX(0.943)">2025-01-07</div>
<div class="cell" style="top:696px;left:652px;transform:scaleX(0.883)">PRUEBA PARAMETRO</div>
<div class="cell" style="top:696px;left:767px;transform:scaleX(0.912)">Paris</div>
<div class="cell" style="top:696px;left:863px;transform:scaleX(0.909)">France</div>
<div class="cell r" style="top:696px;right:-11.5px;transform:scaleX(0.89)">13,86</div>
<div class="rn" style="top:713px"><span>24</span></div>
<div class="cell" style="top:713px;left:24px;transform:scaleX(0.923)">334<span class="u">_</span>1808</div>
<div class="cell r" style="top:713px;right:821.3px;transform:scaleX(0.906)">334</div>
<div class="cell r" style="top:713px;right:719.1px;transform:scaleX(0.89)">1.459.747.127</div>
<div class="cell r" style="top:713px;right:590.5px;transform:scaleX(0.89)">2.056.399.495</div>
<div class="cell r" style="top:713px;right:484.5px;transform:scaleX(0.89)">484.304.661</div>
<div class="cell r" style="top:713px;right:381.0px;transform:scaleX(0.943)">2025-01-07</div>
<div class="cell" style="top:713px;left:652px;transform:scaleX(0.883)">PRUEBA PARAMETRO</div>
<div class="cell" style="top:713px;left:767px;transform:scaleX(0.912)">Paris</div>
<div class="cell" style="top:713px;left:863px;transform:scaleX(0.909)">France</div>
<div class="cell r nul" style="top:713px;right:-11.5px;transform:scaleX(0.9)">[NULL]</div>
<div class="rn" style="top:730px"><span>25</span></div>
<div class="cell" style="top:730px;left:24px;transform:scaleX(0.923)">334<span class="u">_</span>1809</div>
<div class="cell r" style="top:730px;right:821.3px;transform:scaleX(0.906)">334</div>
<div class="cell r" style="top:730px;right:719.1px;transform:scaleX(0.89)">1.459.747.127</div>
<div class="cell r" style="top:730px;right:590.5px;transform:scaleX(0.89)">2.056.399.495</div>
<div class="cell r" style="top:730px;right:484.5px;transform:scaleX(0.89)">484.304.661</div>
<div class="cell r" style="top:730px;right:381.0px;transform:scaleX(0.943)">2025-01-07</div>
<div class="cell" style="top:730px;left:652px;transform:scaleX(0.883)">PRUEBA PARAMETRO</div>
<div class="cell" style="top:730px;left:767px;transform:scaleX(0.912)">Paris</div>
<div class="cell" style="top:730px;left:863px;transform:scaleX(0.909)">France</div>
<div class="cell r nul" style="top:730px;right:-11.5px;transform:scaleX(0.9)">[NULL]</div>
<div class="rn" style="top:747px"><span>26</span></div>
<div class="cell" style="top:747px;left:24px;transform:scaleX(0.923)">334<span class="u">_</span>1810</div>
<div class="cell r" style="top:747px;right:821.3px;transform:scaleX(0.906)">334</div>
<div class="cell r" style="top:747px;right:719.1px;transform:scaleX(0.89)">1.459.747.127</div>
<div class="cell r" style="top:747px;right:590.5px;transform:scaleX(0.89)">2.056.399.495</div>
<div class="cell r" style="top:747px;right:484.5px;transform:scaleX(0.89)">484.304.661</div>
<div class="cell r" style="top:747px;right:381.0px;transform:scaleX(0.943)">2025-01-07</div>
<div class="cell" style="top:747px;left:652px;transform:scaleX(0.883)">PRUEBA PARAMETRO</div>
<div class="cell" style="top:747px;left:767px;transform:scaleX(0.912)">Paris</div>
<div class="cell" style="top:747px;left:863px;transform:scaleX(0.909)">France</div>
<div class="cell r nul" style="top:747px;right:-11.5px;transform:scaleX(0.9)">[NULL]</div>
</div>
<div style="position:absolute;left:0;top:322px;width:1024px;height:1px;background:#a0a8b0"></div>
<div class="selcell" style="top:322px;left:20px;width:97px"></div>
<div class="cell wt" style="top:321.5px;left:24px;transform:scaleX(0.916)">331<span class="u">_</span>-1</div>
</body></html>
